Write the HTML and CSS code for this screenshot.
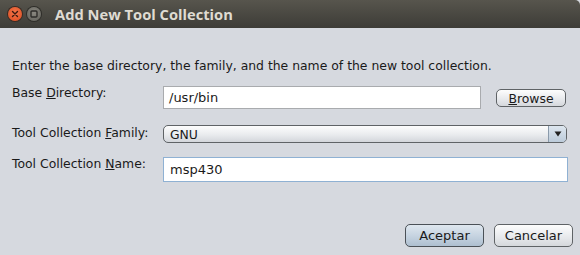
FILE: index.html
```html
<!DOCTYPE html>
<html>
<head>
<meta charset="utf-8">
<link rel="stylesheet" href="styles.css">
</head>
<body>
<div class="window">
  <div class="titlebar">
    <div class="wbtn close"><svg width="14" height="14" viewBox="0 0 14 14"><path d="M4.5 4.5 L9.5 9.5 M9.5 4.5 L4.5 9.5" stroke="#3a1a10" stroke-width="1.4" stroke-linecap="round"/></svg></div>
    <div class="wbtn min"><svg width="14" height="14" viewBox="0 0 14 14"><rect x="4" y="4" width="6" height="6" rx="1" fill="none" stroke="#2e2d2a" stroke-width="1.4"/></svg></div>
    <div class="title">Add New Tool Collection</div>
  </div>
  <div class="content">
    <p class="intro">Enter the base directory, the family, and the name of the new tool collection.</p>
    <div class="form">
      <div class="label row1">Base <u>D</u>irectory:</div>
      <div class="field-row row1">
        <div class="textfield dir">/usr/bin</div>
        <div class="button browse"><u>B</u>rowse</div>
      </div>
      <div class="label row2">Tool Collection <u>F</u>amily:</div>
      <div class="combo row2">
        <div class="combo-text">GNU</div>
        <div class="combo-arrow"><svg width="8" height="6" viewBox="0 0 8 6"><path d="M0.5 0.5 L7.5 0.5 L4 5.5 Z" fill="#222"/></svg></div>
      </div>
      <div class="label row3">Tool Collection <u>N</u>ame:</div>
      <div class="textfield name row3">msp430</div>
    </div>
    <div class="actions">
      <div class="button default">Aceptar</div>
      <div class="button">Cancelar</div>
    </div>
  </div>
</div>
</body>
</html>
```
FILE: styles.css
```css
html, body {
  margin: 0;
  padding: 0;
  width: 580px;
  height: 255px;
  overflow: hidden;
  background: #d6d9df;
}
.window {
  width: 580px;
  height: 255px;
  display: flex;
  flex-direction: column;
  font-family: "DejaVu Sans", sans-serif;
  font-size: 12.4px;
  color: #1a1a1a;
}
.titlebar {
  height: 28px;
  flex: none;
  display: flex;
  align-items: center;
  background: linear-gradient(#57554d, #3d3c37);
  border-top-right-radius: 5px;
  padding-left: 8px;
  box-sizing: border-box;
}
.wbtn {
  width: 14px;
  height: 14px;
  border-radius: 50%;
  display: flex;
  margin-right: 5px;
}
.wbtn.close {
  background: radial-gradient(circle at 50% 40%, #f2764a, #dd4a1e);
  box-shadow: 0 0 0 1px #3a2a22;
}
.wbtn.min {
  background: radial-gradient(circle at 50% 40%, #8a8880, #5f5e58);
  box-shadow: 0 0 0 1px #2e2d29;
}
.title {
  margin-left: 9px;
  color: #dfdbd2;
  font-family: "Open Sans", sans-serif;
  font-weight: bold;
  font-size: 14.7px;
}
.content {
  flex: 1;
  display: flex;
  flex-direction: column;
  padding: 0 7px 8px 12px;
}
.intro {
  margin: 30px 0 12px 0;
  line-height: 15px;
}
.form {
  display: grid;
  grid-template-columns: 151px 1fr;
  grid-template-rows: 38px 32px 30px;
  align-items: start;
}
.label {
  line-height: 15px;
}
.label.row1 { padding-top: 0; }
.label.row2 { padding-top: 2px; }
.label.row3 { padding-top: 1px; }
.field-row {
  display: flex;
  align-items: flex-start;
}
.textfield {
  box-sizing: border-box;
  background: #fff;
  border: 1px solid #a9abae;
  padding: 0 5px;
  font-size: 13px;
  display: flex;
  align-items: center;
}
.textfield.dir {
  width: 318px;
  height: 23px;
  margin-top: 1px;
}
.textfield.name {
  width: 405px;
  height: 25px;
  margin-top: 2px;
  border-color: #8fb1d3;
  padding-left: 6px;
}
.button {
  box-sizing: border-box;
  height: 18px;
  border: 1px solid #5f6366;
  border-radius: 5px;
  background: linear-gradient(#fdfdfd, #e6e8eb 60%, #d5d8dc);
  display: flex;
  align-items: center;
  justify-content: center;
  line-height: 15px;
}
.button.browse {
  width: 70px;
  margin-left: 15px;
  margin-top: 4px;
}
.combo {
  box-sizing: border-box;
  width: 404px;
  height: 18px;
  border: 1px solid #5f6366;
  border-radius: 5px;
  background: linear-gradient(#fdfdfd, #e9ebee 55%, #d3d6db);
  display: flex;
  align-items: center;
  margin-top: 2px;
  overflow: hidden;
}
.combo-text {
  flex: 1;
  padding-left: 6px;
  line-height: 15px;
}
.combo-arrow {
  width: 17px;
  height: 100%;
  border-left: 1px solid #8a9aab;
  background: linear-gradient(#dde6ef, #bccbda);
  display: flex;
  align-items: center;
  justify-content: center;
}
.actions {
  margin-top: auto;
  display: flex;
  justify-content: flex-end;
  gap: 10px;
}
.actions .button {
  width: 79px;
  height: 23px;
  font-size: 13px;
}
.actions .button.default {
  background: linear-gradient(#dfe7ef, #c2d0de 60%, #aebfd0);
  border-color: #4b5157;
}
```
